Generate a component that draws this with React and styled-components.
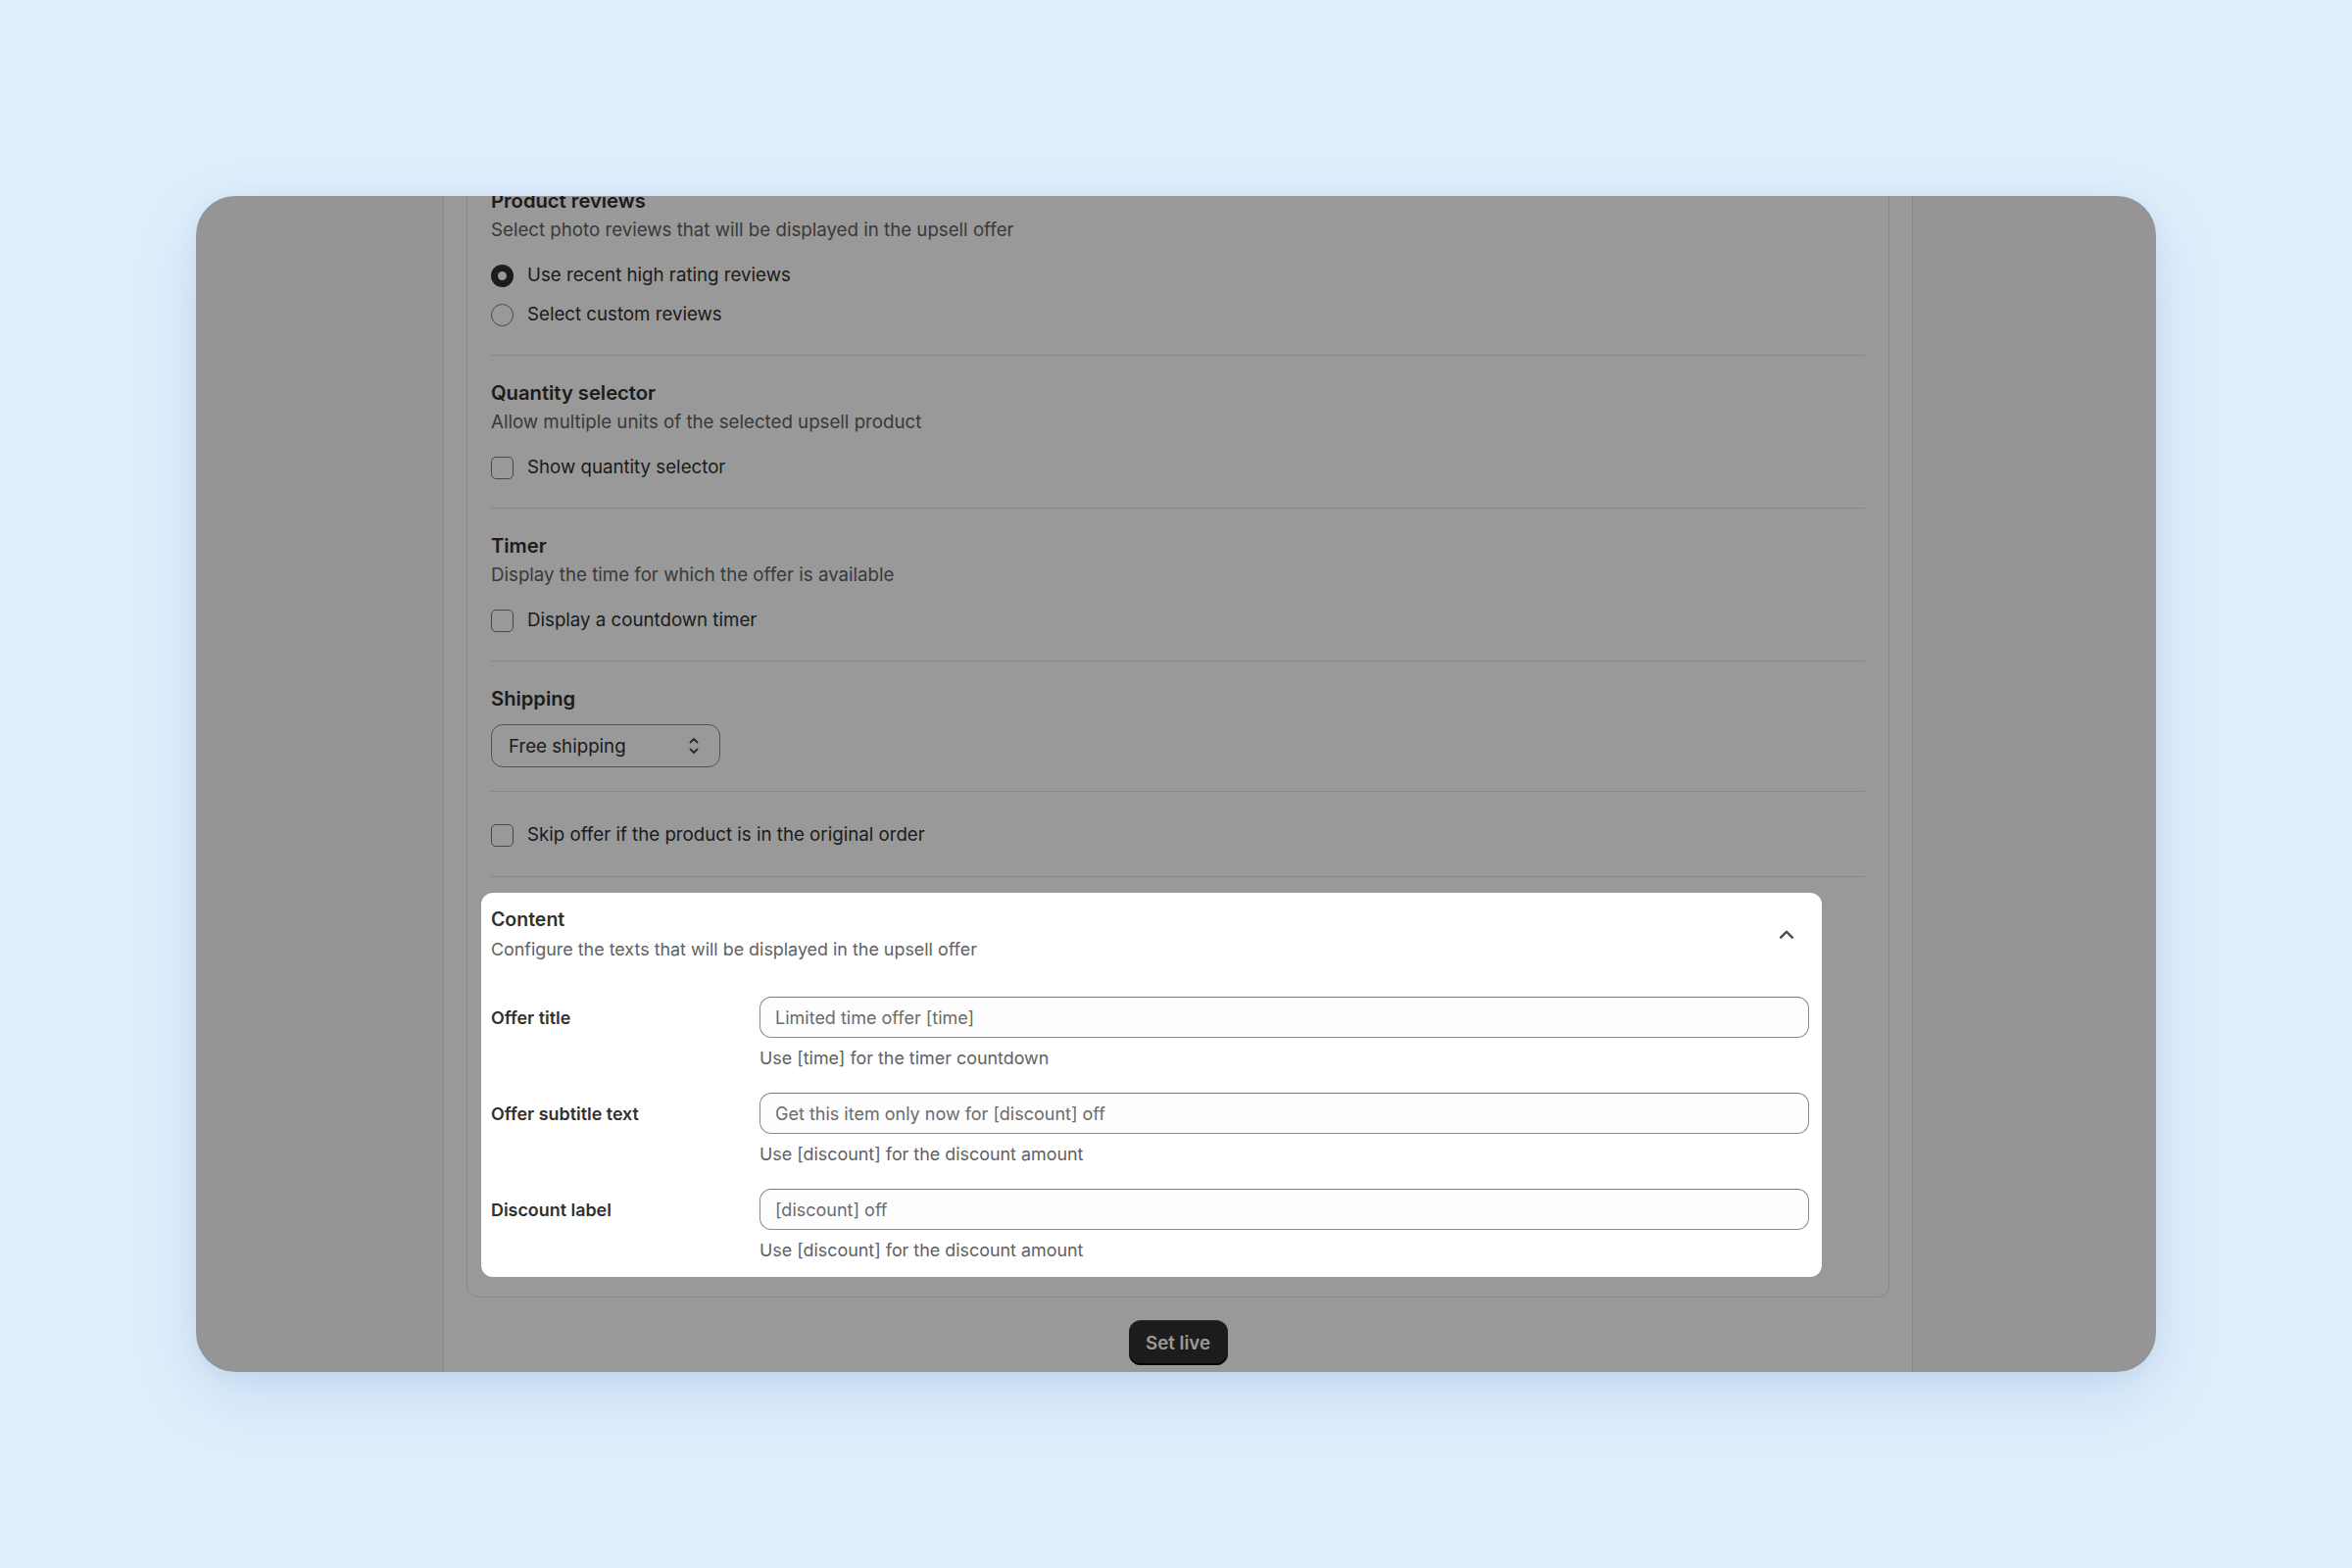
import React from 'react';
import styled, { createGlobalStyle } from 'styled-components';

const GlobalStyle = createGlobalStyle`
  body {
    margin: 0;
    background: #e0effd;
    font-family: Inter, "Noto Sans", sans-serif;
    -webkit-font-smoothing: antialiased;
  }
`;

const sections = [
  {
    title: 'Product reviews',
    subtitle: 'Select photo reviews that will be displayed in the upsell offer',
    type: 'radio',
    options: [
      { label: 'Use recent high rating reviews', checked: true },
      { label: 'Select custom reviews', checked: false },
    ],
  },
  {
    title: 'Quantity selector',
    subtitle: 'Allow multiple units of the selected upsell product',
    type: 'checkbox',
    options: [{ label: 'Show quantity selector' }],
  },
  {
    title: 'Timer',
    subtitle: 'Display the time for which the offer is available',
    type: 'checkbox',
    options: [{ label: 'Display a countdown timer' }],
  },
];

const contentFields = [
  { label: 'Offer title', placeholder: 'Limited time offer [time]', help: 'Use [time] for the timer countdown' },
  { label: 'Offer subtitle text', placeholder: 'Get this item only now for [discount] off', help: 'Use [discount] for the discount amount' },
  { label: 'Discount label', placeholder: '[discount] off', help: 'Use [discount] for the discount amount' },
];

const SelectIcon = () => (
  <svg width="28" height="28" viewBox="0 0 20 20" fill="none" stroke="#4a4a4a" strokeWidth="1.3" strokeLinecap="round" strokeLinejoin="round">
    <path d="M7.5 7.5 L10 5 L12.5 7.5" />
    <path d="M7.5 12.5 L10 15 L12.5 12.5" />
  </svg>
);

const ChevronUp = () => (
  <svg width="26" height="26" viewBox="0 0 20 20" fill="none" stroke="#4a4a4a" strokeWidth="1.9" strokeLinecap="round" strokeLinejoin="round">
    <path d="M5.5 12 L10 7.5 L14.5 12" />
  </svg>
);

const App = () => {
  return (
    <>
      <GlobalStyle />
      <Page>
        <Frame>
          <Column>
            <SettingsCard>
              {sections.map((section) => (
                <Section key={section.title}>
                  <SectionTitle>{section.title}</SectionTitle>
                  <SectionSubtitle>{section.subtitle}</SectionSubtitle>
                  <OptionList>
                    {section.options.map((option) => (
                      <OptionRow key={option.label}>
                        {section.type === 'radio' ? (
                          <Radio $checked={option.checked} />
                        ) : (
                          <Checkbox />
                        )}
                        <OptionLabel>{option.label}</OptionLabel>
                      </OptionRow>
                    ))}
                  </OptionList>
                </Section>
              ))}

              <Section $bottom="24px">
                <SectionTitle>Shipping</SectionTitle>
                <SelectBox>
                  <span>Free shipping</span>
                  <SelectIcon />
                </SelectBox>
              </Section>

              <Section $top="30px" $bottom="28px">
                <OptionRow>
                  <Checkbox />
                  <OptionLabel>Skip offer if the product is in the original order</OptionLabel>
                </OptionRow>
              </Section>

              <ContentSection>
                <ContentHeader>
                  <div>
                    <ContentTitle>Content</ContentTitle>
                    <ContentSubtitle>Configure the texts that will be displayed in the upsell offer</ContentSubtitle>
                  </div>
                  <ChevronUp />
                </ContentHeader>
                <FieldGrid>
                  {contentFields.map((field) => (
                    <React.Fragment key={field.label}>
                      <FieldLabel>{field.label}</FieldLabel>
                      <FieldBody>
                        <TextInput placeholder={field.placeholder} readOnly />
                        <HelpText>{field.help}</HelpText>
                      </FieldBody>
                    </React.Fragment>
                  ))}
                </FieldGrid>
              </ContentSection>
            </SettingsCard>

            <Footer>
              <PrimaryButton>Set live</PrimaryButton>
            </Footer>
          </Column>
          <Dimmer />
        </Frame>
      </Page>
    </>
  );
};

// Styled Components
const Page = styled.div`
  min-height: 1600px;
  padding-top: 200px;
  box-sizing: border-box;
  display: flex;
  justify-content: center;
  align-items: flex-start;
`;

const Frame = styled.div`
  position: relative;
  isolation: isolate;
  width: 2000px;
  height: 1200px;
  border-radius: 40px;
  overflow: hidden;
  background: #f8f8f8;
  padding-left: 252px;
  box-sizing: border-box;
  box-shadow: 0 24px 70px rgba(60, 110, 170, 0.16), 0 4px 20px rgba(60, 110, 170, 0.08);
`;

const Dimmer = styled.div`
  position: absolute;
  inset: 0;
  z-index: 1;
  background: rgba(0, 0, 0, 0.4);
`;

const Column = styled.div`
  width: 1500px;
  height: 100%;
  box-sizing: border-box;
  background: #ffffff;
  border-left: 1px solid #e6e6e6;
  border-right: 1px solid #e6e6e6;
  padding: 0 23px;
  overflow: hidden;
`;

const SettingsCard = styled.div`
  margin-top: -34px;
  background: #ffffff;
  border: 1px solid #e3e3e3;
  border-radius: 12px;
  padding: 0 24px;
`;

const Section = styled.div`
  padding: ${(p) => p.$top || '24px'} 0 ${(p) => p.$bottom || '27px'};
  border-bottom: 1px solid #e3e3e3;
`;

const SectionTitle = styled.div`
  font-size: 20.2px;
  line-height: 28px;
  font-weight: 600;
  color: #303030;
`;

const SectionSubtitle = styled.div`
  margin-top: 2px;
  font-size: 18.7px;
  line-height: 28px;
  color: #616161;
`;

const OptionList = styled.div`
  display: flex;
  flex-direction: column;
  gap: 12px;
  margin-top: 18px;
`;

const OptionRow = styled.label`
  display: flex;
  align-items: center;
  gap: 14px;
  height: 28px;
`;

const OptionLabel = styled.span`
  font-size: 18.7px;
  line-height: 28px;
  color: #303030;
`;

const Radio = styled.span`
  width: 23px;
  height: 23px;
  box-sizing: border-box;
  border-radius: 50%;
  background: #ffffff;
  border: ${(p) => (p.$checked ? '7.5px solid #303030' : '1.5px solid #7a7a7a')};
  flex-shrink: 0;
`;

const Checkbox = styled.span`
  width: 23px;
  height: 23px;
  box-sizing: border-box;
  border-radius: 5px;
  background: #ffffff;
  border: 1.5px solid #7a7a7a;
  flex-shrink: 0;
`;

const SelectBox = styled.div`
  margin-top: 12px;
  width: 234px;
  height: 44px;
  box-sizing: border-box;
  border: 1.5px solid #8a8a8a;
  border-radius: 12px;
  padding: 0 12px 0 17px;
  display: flex;
  align-items: center;
  justify-content: space-between;
  font-size: 18.7px;
  color: #303030;
`;

const ContentSection = styled.div`
  position: relative;
  z-index: 2;
  margin: 16px 44px 20px -10px;
  padding: 13px 13px 13px 10px;
  background: #ffffff;
  border-radius: 12px;
`;

const ContentHeader = styled.div`
  display: flex;
  align-items: center;
  justify-content: space-between;
  padding-right: 10px;
`;

const ContentTitle = styled.div`
  font-size: 19.5px;
  line-height: 28px;
  font-weight: 600;
  color: #303030;
`;

const ContentSubtitle = styled.div`
  margin-top: 3px;
  font-size: 17.9px;
  line-height: 28px;
  color: #616161;
`;

const FieldGrid = styled.div`
  display: grid;
  grid-template-columns: 258px 1fr;
  column-gap: 16px;
  row-gap: 21px;
  margin-top: 34px;
`;

const FieldLabel = styled.div`
  font-size: 17.9px;
  line-height: 43px;
  font-weight: 600;
  color: #303030;
`;

const FieldBody = styled.div`
  display: flex;
  flex-direction: column;
  gap: 7px;
`;

const TextInput = styled.input`
  height: 42px;
  box-sizing: border-box;
  width: 100%;
  padding: 0 15px;
  border: 1.5px solid #8a8a8a;
  border-top-color: #7a7a7a;
  border-radius: 12px;
  background: #fdfdfd;
  font-family: Inter, "Noto Sans", sans-serif;
  font-size: 18px;
  color: #303030;
  outline: none;

  &::placeholder {
    color: #6b6b6b;
  }
`;

const HelpText = styled.div`
  font-size: 17.9px;
  line-height: 28px;
  color: #616161;
`;

const Footer = styled.div`
  display: flex;
  justify-content: center;
  padding-top: 23px;
`;

const PrimaryButton = styled.button`
  width: 101px;
  height: 46px;
  border: none;
  border-radius: 12px;
  background: #303030;
  color: #ffffff;
  font-family: Inter, "Noto Sans", sans-serif;
  font-size: 18.7px;
  font-weight: 600;
  box-shadow: inset 0 -2px 0 #0a0a0a, inset 0 1px 0 rgba(255, 255, 255, 0.15);
  cursor: pointer;
`;

export default App;
